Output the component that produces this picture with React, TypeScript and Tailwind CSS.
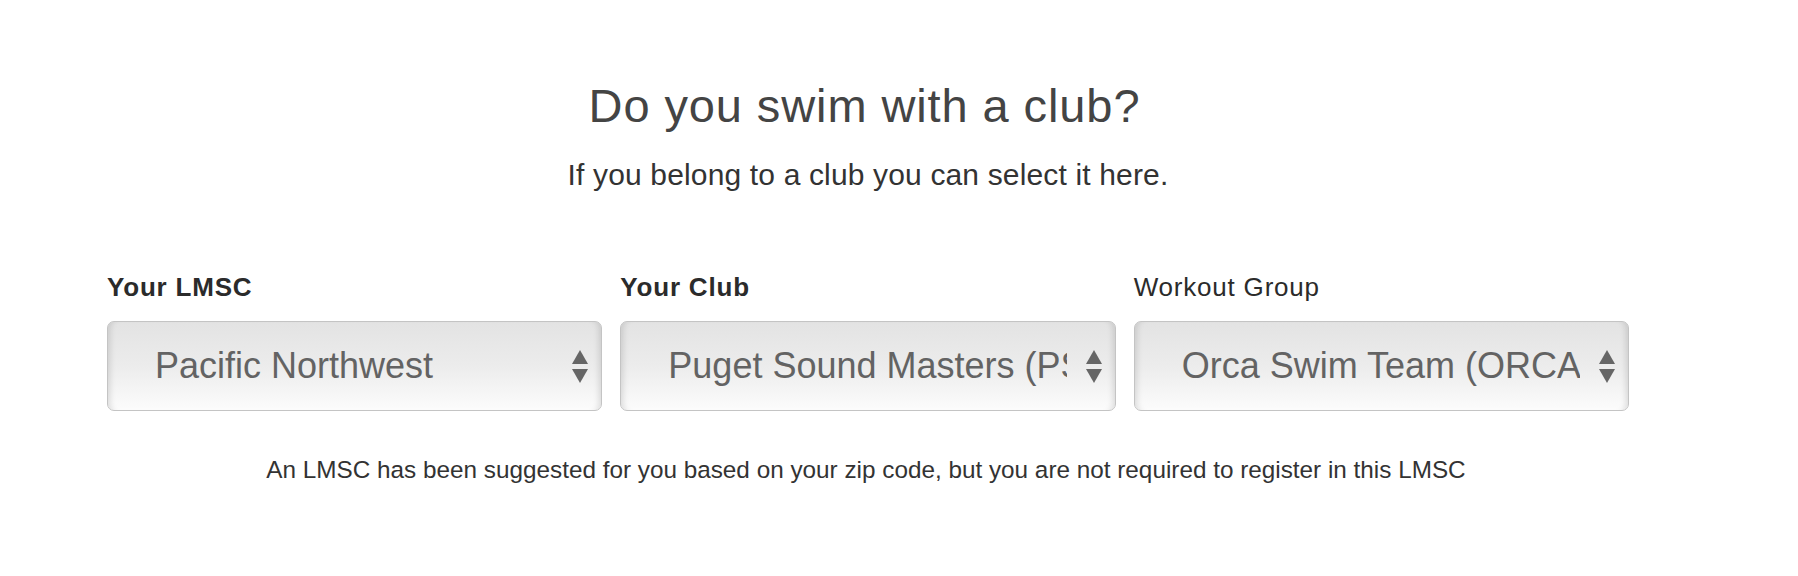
const font = { fontFamily: '"Liberation Sans", Arial, Helvetica, sans-serif' };

/* ------------------------------------------------------------------ */
/*  Data                                                               */
/* ------------------------------------------------------------------ */
const fields = [
  { label: 'Your LMSC', bold: true, value: 'Pacific Northwest' },
  { label: 'Your Club', bold: true, value: 'Puget Sound Masters (PSM)' },
  { label: 'Workout Group', bold: false, value: 'Orca Swim Team (ORCA)' },
];

/* ------------------------------------------------------------------ */
/*  Up / down arrows of the select                                     */
/* ------------------------------------------------------------------ */
function SelectArrows() {
  return (
    <svg width="16" height="33" viewBox="0 0 16 33" className="ml-[19px] shrink-0" fill="#666666">
      <polygon points="8,0 16,14 0,14" />
      <polygon points="0,19 16,19 8,33" />
    </svg>
  );
}

/* ------------------------------------------------------------------ */
/*  Fake native select box                                             */
/* ------------------------------------------------------------------ */
function SelectBox({ value }: { value: string }) {
  return (
    <div className="relative flex h-[90px] items-center overflow-hidden rounded-[7px] border border-[#c4c4c4] bg-linear-to-b from-[#e3e3e3] via-[#ececec] to-[#fcfcfc] pl-[47px] pr-[13px] shadow-[inset_7px_0_6px_-5px_rgba(0,0,0,0.13),inset_-7px_0_6px_-5px_rgba(0,0,0,0.13),inset_0_-2px_2px_-1px_rgba(255,255,255,0.9)]">
      <span className="min-w-0 flex-1 overflow-hidden whitespace-nowrap text-[36px] leading-[40px] text-[#636363]">
        {value}
      </span>
      <SelectArrows />
    </div>
  );
}

/* ------------------------------------------------------------------ */
/*  Page                                                               */
/* ------------------------------------------------------------------ */
export default function App() {
  return (
    <div className="h-[576px] w-full bg-white" style={font}>
      <div className="ml-[107px] w-[1522px] pt-[80px]">
        <h2 className="pr-[7px] text-center text-[47px] leading-[52px] tracking-[0.9px] font-normal text-[#444444]">
          Do you swim with a club?
        </h2>
        <p className="mt-[25px] text-center text-[30px] leading-[36px] tracking-[0.15px] text-[#333333]">
          If you belong to a club you can select it here.
        </p>

        <div className="mt-[79px] grid grid-cols-3 gap-x-[18px]">
          {fields.map((f) => (
            <div key={f.label}>
              <label
                className={`block text-[26px] leading-[30px] tracking-[0.8px] text-[#2b2b2b] ${
                  f.bold ? 'font-bold' : 'font-normal'
                }`}
              >
                {f.label}
              </label>
              <div className="mt-[19px]">
                <SelectBox value={f.value} />
              </div>
            </div>
          ))}
        </div>

        <p className="mt-[45px] pr-[4px] text-center text-[24.3px] leading-[28px] text-[#333333]">
          An LMSC has been suggested for you based on your zip code, but you are not required to register in this LMSC
        </p>
      </div>
    </div>
  );
}
